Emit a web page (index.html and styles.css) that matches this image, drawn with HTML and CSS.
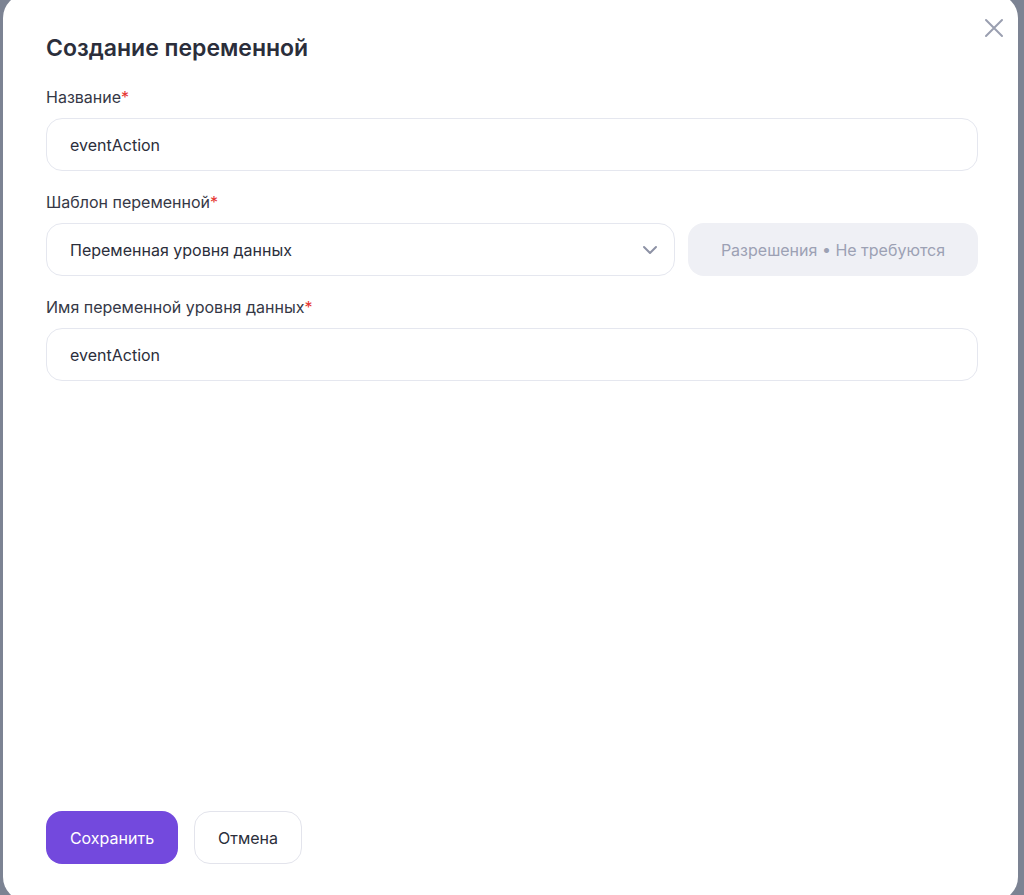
FILE: index.html
```html
<!DOCTYPE html>
<html lang="ru">
<head>
<meta charset="utf-8">
<title>Создание переменной</title>
<link rel="stylesheet" href="styles.css">
</head>
<body>
<div class="modal">
  <button class="close" aria-label="Закрыть">
    <svg width="20" height="20" viewBox="0 0 20 20"><path d="M2 2 L18 18 M18 2 L2 18" stroke="#9a9fb0" stroke-width="2" stroke-linecap="round" fill="none"/></svg>
  </button>
  <h1 class="title">Создание переменной</h1>
  <div class="form">
    <div class="field">
      <label class="label">Название<span class="req">*</span></label>
      <div class="input">eventAction</div>
    </div>
    <div class="field">
      <label class="label">Шаблон переменной<span class="req">*</span></label>
      <div class="row">
        <div class="input select">
          <span>Переменная уровня данных</span>
          <svg width="16" height="10" viewBox="0 0 16 10"><path d="M2 2 L8 8 L14 2" stroke="#8d92a5" stroke-width="2" stroke-linecap="round" stroke-linejoin="round" fill="none"/></svg>
        </div>
        <div class="perm">Разрешения • Не требуются</div>
      </div>
    </div>
    <div class="field">
      <label class="label">Имя переменной уровня данных<span class="req">*</span></label>
      <div class="input">eventAction</div>
    </div>
  </div>
  <div class="actions">
    <button class="btn primary">Сохранить</button>
    <button class="btn secondary">Отмена</button>
  </div>
</div>
</body>
</html>
```
FILE: styles.css
```css
html, body {
  margin: 0;
  padding: 0;
  height: 100%;
  overflow: hidden;
}
body {
  background: #7c8393;
  font-family: Inter, "Noto Sans", "Liberation Sans", sans-serif;
  color: #2b2e3b;
}
.modal {
  position: relative;
  box-sizing: border-box;
  margin: -6px 0 0 3px;
  width: 1015px;
  height: 907px;
  background: #fff;
  border-radius: 24px;
  padding: 40px 40px 37px 43px;
  display: flex;
  flex-direction: column;
}
.close {
  position: absolute;
  top: 24px;
  right: 14px;
  border: 0;
  background: none;
  padding: 0;
  width: 20px;
  height: 20px;
  cursor: pointer;
}
.close svg { display: block; }
.title {
  margin: 0;
  font-size: 23px;
  line-height: 28px;
  font-weight: 600;
  letter-spacing: 0;
  color: #2b2e3b;
}
.form {
  display: flex;
  flex-direction: column;
  gap: 20px;
  margin-top: 24px;
}
.field {
  display: flex;
  flex-direction: column;
  gap: 10px;
}
.label {
  font-size: 16px;
  line-height: 22px;
  color: #353846;
}
.req { color: #e5322d; }
.input {
  box-sizing: border-box;
  height: 53px;
  border: 1px solid #e5e7ef;
  border-radius: 16px;
  padding: 0 23px;
  display: flex;
  align-items: center;
  font-size: 16px;
  color: #2b2e3b;
}
.row {
  display: flex;
  gap: 13px;
}
.select {
  flex: 0 0 629px;
  justify-content: space-between;
  padding-right: 16px;
}
.perm {
  flex: 1;
  height: 53px;
  border-radius: 16px;
  background: #eff0f5;
  color: #9ca1b4;
  font-size: 16px;
  display: flex;
  align-items: center;
  justify-content: center;
}
.actions {
  margin-top: auto;
  display: flex;
  gap: 16px;
}
.btn {
  height: 53px;
  border-radius: 16px;
  font-family: inherit;
  font-size: 16px;
  padding: 0 23px;
  cursor: pointer;
}
.primary {
  width: 132px;
  background: #7349dd;
  border: 0;
  color: #fff;
}
.secondary {
  width: 108px;
  background: #fff;
  border: 1px solid #e3e4ec;
  color: #2b2e3b;
}
```
